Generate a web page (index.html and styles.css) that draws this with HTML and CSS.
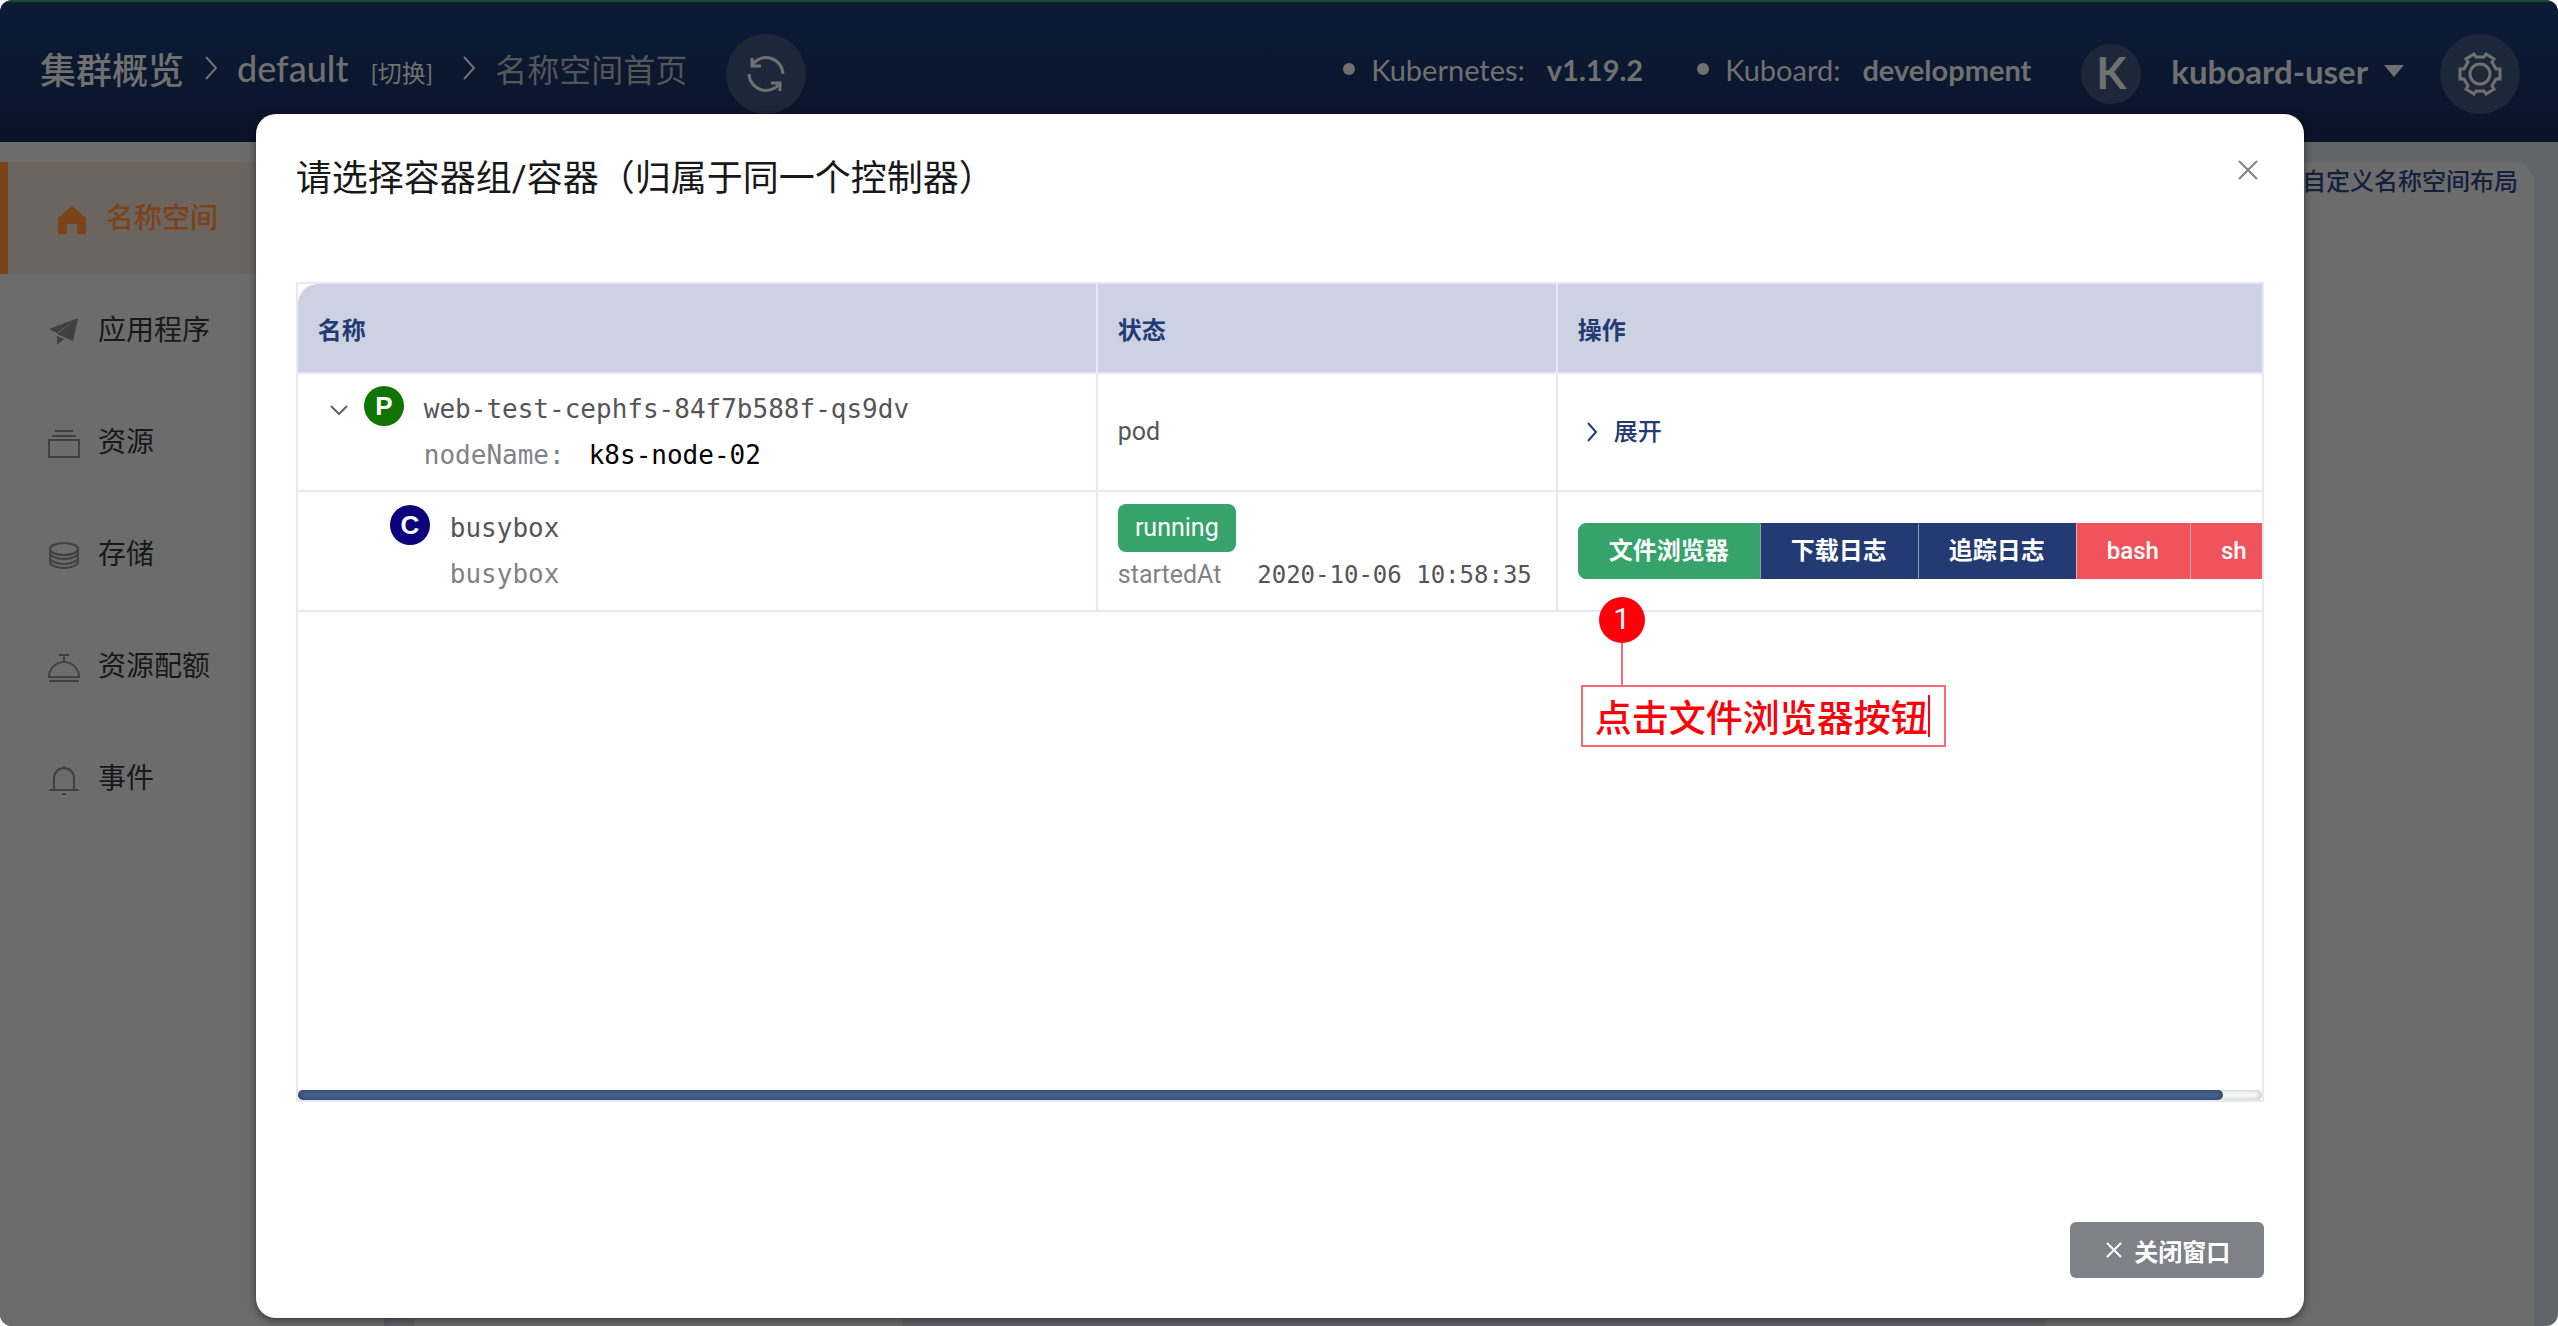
FILE: index.html
```html
<!DOCTYPE html>
<html lang="zh-CN">
<head>
<meta charset="utf-8">
<meta name="viewport" content="width=device-width, initial-scale=1">
<title>Kuboard - 名称空间首页</title>
<link rel="stylesheet" href="styles.css">
</head>
<body>
<div class="app">
  <header class="topbar">
    <nav class="crumbs">
      <a class="crumb" href="#">集群概览</a>
      <svg class="sep" viewBox="0 0 14 24"><path d="M2 1l10 11L2 23"/></svg>
      <a class="crumb" href="#">default</a>
      <a class="crumb-switch" href="#">[切换]</a>
      <svg class="sep" viewBox="0 0 14 24"><path d="M2 1l10 11L2 23"/></svg>
      <span class="crumb-current">名称空间首页</span>
    </nav>
    <button class="round-btn refresh" aria-label="刷新">
      <svg width="40" height="40" viewBox="0 0 40 40"><path d="M37 20A17 17 0 0 0 6 11M3 20a17 17 0 0 0 31 9M6 4v8h9M34 37v-8h-9"/></svg>
    </button>
    <div class="info">
      <span class="version"><i class="dot"></i>Kubernetes:<b>v1.19.2</b></span>
      <span class="version"><i class="dot"></i>Kuboard:<b>development</b></span>
    </div>
    <button class="user"><span class="avatar">K</span><span class="user-name">kuboard-user<svg width="20" height="12" viewBox="0 0 20 12"><path d="M0 0h20L10 12z"/></svg></span></button>
    <button class="round-btn" aria-label="设置">
      <svg width="44" height="44" viewBox="0 0 44 44"><circle cx="22" cy="22" r="10"/><path d="M16 2L18 5H26L28 2L36 7L34 10L38 17H42V27H38L34 34L36 37L28 42L26 39H18L16 42L8 37L10 34L6 27H2V17H6L10 10L8 7z"/></svg>
    </button>
  </header>
  <div class="layout">
    <nav class="sidebar">
      <a class="item active" href="#"><svg class="solid" viewBox="0 0 32 32"><path d="M16 2l14 12v16h-9V20H11v10H2V14z"/></svg>名称空间</a>
      <a class="item" href="#"><svg class="solid" viewBox="0 0 32 32"><path d="M30 2L1 13l8 4zM30 2L9 18l16 7zM9 20v9l7-6z"/></svg>应用程序</a>
      <a class="item" href="#"><svg viewBox="0 0 32 32"><path d="M1 12h30v17H1zM4 8h24M7 3h18"/></svg>资源</a>
      <a class="item" href="#"><svg viewBox="0 0 32 32"><ellipse cx="16" cy="9" rx="14" ry="6"/><path d="M2 9v3c0 4 6 7 14 7s14-3 14-7V9M2 13v4c0 4 6 7 14 7s14-3 14-7v-4M2 18v4c0 3 6 6 14 6s14-3 14-6v-4"/></svg>存储</a>
      <a class="item" href="#"><svg viewBox="0 0 32 32"><path d="M1 25a15 15 0 0 1 30 0zM1 29h30M11 3h10M16 3v6"/></svg>资源配额</a>
      <a class="item" href="#"><svg viewBox="0 0 32 32"><path d="M6 26V14a10 10 0 0 1 20 0v12M1 26h30M16 2v3M14 30h4"/></svg>事件</a>
    </nav>
    <main class="content">
      <div class="panel"></div>
      <div class="panel"><a href="#">自定义名称空间布局</a></div>
    </main>
  </div>

  <div class="overlay">
    <section class="dialog" role="dialog" aria-labelledby="dialog-title">
      <div class="dialog-head">
        <h2 id="dialog-title">请选择容器组/容器（归属于同一个控制器）</h2>
        <button class="dialog-x" aria-label="关闭"><svg width="20" height="20" viewBox="0 0 20 20"><path d="M1 1l18 18M19 1L1 19"/></svg></button>
      </div>
      <div class="table-box">
        <div class="table-scroll">
          <table>
            <colgroup><col class="col-name"><col class="col-state"><col></colgroup>
            <thead><tr><th>名称</th><th>状态</th><th>操作</th></tr></thead>
            <tbody>
              <tr>
                <td>
                  <div class="entry pod-entry">
                    <svg class="caret" width="18" height="12" viewBox="0 0 18 12"><path d="M1 2l8 8 8-8"/></svg>
                    <span class="badge pod">P</span>
                    <div class="mono"><div>web-test-cephfs-84f7b588f-qs9dv</div><div><span class="muted">nodeName:</span><span class="node">k8s-node-02</span></div></div>
                  </div>
                </td>
                <td>pod</td>
                <td><button class="expand"><svg width="12" height="20" viewBox="0 0 12 20"><path d="M2 1l8 9-8 9"/></svg>展开</button></td>
              </tr>
              <tr>
                <td>
                  <div class="entry box-entry">
                    <span class="badge box">C</span>
                    <div class="mono"><div>busybox</div><div class="muted">busybox</div></div>
                  </div>
                </td>
                <td>
                  <span class="tag">running</span>
                  <div class="started"><span class="muted">startedAt</span><time>2020-10-06 10:58:35</time></div>
                </td>
                <td>
                  <div class="actions">
                    <button class="success">文件浏览器</button><button class="primary">下载日志</button><button class="primary">追踪日志</button><button class="danger">bash</button><button class="danger">sh</button>
                  </div>
                </td>
              </tr>
            </tbody>
          </table>
        </div>
        <div class="track"><div class="thumb"></div></div>
      </div>
      <div class="dialog-foot">
        <button class="close"><svg width="16" height="16" viewBox="0 0 16 16"><path d="M1 1l14 14M15 1L1 15"/></svg>关闭窗口</button>
      </div>
      <div class="callout">
        <span class="step">1</span>
        <span class="stem"></span>
        <div class="note">点击文件浏览器按钮<i class="cursor"></i></div>
      </div>
    </section>
  </div>
</div>
</body>
</html>
```
FILE: styles.css
```css
* { box-sizing: border-box; }
body {
  margin: 0;
  background: #fff;
  font-family: Roboto, "Noto Sans CJK SC", sans-serif;
  font-size: 24px;
}
a { color: inherit; text-decoration: none; }
button { border: 0; padding: 0; background: none; color: inherit; font: inherit; cursor: pointer; }
svg { display: block; flex: none; fill: none; stroke: currentColor; stroke-width: 2; }

.app {
  position: relative;
  display: flex;
  flex-direction: column;
  min-height: 100vh;
  border-radius: 12px;
  overflow: hidden;
  background: #626469;
}

/* top bar */
.topbar {
  position: relative;
  z-index: 1;
  display: flex;
  align-items: center;
  height: 142px;
  padding: 4px 38px 0 40px;
  border-top: 2px solid #1d4a2e;
  background: linear-gradient(#0d1b37, #091428);
  color: #707070;
  font-family: Lato, "Noto Sans CJK SC", sans-serif;
  white-space: nowrap;
}
.crumbs { display: flex; align-items: center; padding-bottom: 12px; }
.crumb { font-size: 36px; font-weight: 500; }
.crumb-switch { margin-left: 22px; padding-top: 6px; font-size: 24px; }
.crumb-current { font-size: 32px; color: #565656; }
.sep { width: 14px; height: 24px; margin: 0 19px 0 20px; }
.crumb-switch + .sep { margin-left: 29px; }
.round-btn {
  display: grid;
  place-items: center;
  flex: none;
  width: 80px;
  height: 80px;
  border-radius: 50%;
  background: #1c2839;
}
.round-btn svg { stroke-width: 3; }
.refresh { margin-left: 39px; }
.info { display: flex; gap: 54px; margin-left: auto; padding-bottom: 10px; font-size: 29px; }
.version { display: flex; align-items: center; font-weight: 400; }
.version b { margin-left: 22px; font-weight: 700; }
.dot { width: 12px; height: 12px; margin-right: 16px; border-radius: 50%; background: #707070; }
.user { display: flex; align-items: center; margin: 0 36px 0 50px; font-size: 33px; font-weight: 700; }
.user-name { display: flex; align-items: center; padding-bottom: 6px; }
.avatar {
  flex: none;
  width: 60px;
  height: 60px;
  margin-right: 30px;
  border-radius: 50%;
  background: #1c2839;
  font-size: 44px;
  line-height: 56px;
  text-align: center;
}
.user svg { margin-left: 16px; fill: currentColor; stroke: none; }

/* page behind the dialog */
.layout { display: flex; flex: 1; }
.sidebar { width: 384px; padding-top: 20px; background: #6c6c6c; box-shadow: 0 0 24px #4e535c; }
.item {
  display: flex;
  align-items: center;
  gap: 18px;
  height: 112px;
  padding: 0 0 4px 48px;
  color: #181818;
  font-size: 28px;
}
.item svg { width: 32px; height: 32px; margin-top: 8px; color: #404040; }
.item .solid { fill: currentColor; stroke: none; }
.item.active { border-left: 8px solid #7a431a; background: #6c655f; color: #7a431a; font-weight: 500; }
.item.active svg { color: #7a431a; }
.content { display: flex; justify-content: space-between; flex: 1; padding: 20px 24px 0 30px; }
.panel {
  width: 488px;
  padding: 0 16px;
  border-radius: 20px 20px 0 0;
  background: #6c6c6c;
  color: #121f3d;
  font-weight: 500;
  line-height: 40px;
  text-align: right;
}

/* dialog */
.overlay { position: absolute; inset: 0; z-index: 2; display: flex; padding: 114px 10% 8px; }
.dialog {
  position: relative;
  display: flex;
  flex-direction: column;
  flex: 1;
  margin-right: -2px;
  padding: 40px;
  border-radius: 20px;
  background: #fff;
  box-shadow: 0 2px 8px rgba(0, 0, 0, .5);
}
.dialog-head { display: flex; justify-content: space-between; align-items: flex-start; margin-bottom: 78px; }
.dialog-head h2 { margin: 0; color: #181818; font-size: 36px; font-weight: 400; line-height: 50px; }
.dialog-x { padding: 6px; color: #808288; }
.table-box { display: flex; flex-direction: column; flex: 1; border: 2px solid #e6e8f5; }
.table-scroll { flex: 1; overflow: hidden; }
table { width: 102%; border-collapse: separate; border-spacing: 0; table-layout: fixed; }
.col-name { width: 800px; }
.col-state { width: 460px; }
th, td { padding: 12px 20px; border-right: 2px solid #e6e8f5; border-bottom: 2px solid #e6e8f5; text-align: left; }
th { height: 90px; background: #ccd2e2; color: #233b72; font-weight: 700; }
th:first-child { border-top-left-radius: 20px; }
td { color: #555; font-size: 25px; line-height: 46px; }
.entry { display: flex; align-items: flex-start; }
.pod-entry { padding-left: 12px; }
.box-entry { padding-left: 72px; }
.caret { margin: 18px 16px 0 0; color: #606266; }
.badge {
  flex: none;
  width: 40px;
  height: 40px;
  margin-right: 20px;
  border-radius: 50%;
  color: #fff;
  font-family: "Liberation Sans", sans-serif;
  font-size: 26px;
  font-weight: 700;
  line-height: 40px;
  text-align: center;
}
.pod { background: #107400; }
.box { background: #0c007c; }
.mono { font-family: "DejaVu Sans Mono", monospace; font-size: 26px; }
.muted { color: #808288; }
.node { margin-left: 24px; color: #000; }
.tag { display: block; width: 118px; height: 48px; border-radius: 8px; background: #35a36a; color: #fff; line-height: 48px; text-align: center; }
.started { display: flex; justify-content: space-between; white-space: nowrap; padding-right: 4px; }
.started time { font-family: "DejaVu Sans Mono", monospace; font-size: 24px; }
.expand { display: flex; align-items: center; gap: 16px; padding-left: 8px; color: #233b72; font-size: 24px; font-weight: 500; }
.actions { display: flex; }
.actions button { height: 56px; padding: 0 30px; border: 1px solid transparent; border-left-color: rgba(255, 255, 255, .5); color: #fff; font-size: 24px; font-weight: 700; white-space: nowrap; }
.actions .success { border-color: #35a36a; border-radius: 8px 0 0 8px; background: #35a36a; }
.actions .primary { background-color: #233b72; }
.actions .danger { background-color: #f1535c; font-weight: 500; }
.actions button:last-child { border-radius: 0 8px 8px 0; }
.track { height: 10px; border-radius: 5px; box-shadow: inset 0 0 6px rgba(0, 0, 0, .3); }
.thumb { width: 98%; height: 10px; border-radius: 5px; background: #475f8c; box-shadow: inset 0 0 5px rgba(0, 0, 0, .4); }
.dialog-foot { display: flex; justify-content: flex-end; padding-top: 120px; }
.close { display: flex; align-items: center; gap: 12px; height: 56px; padding: 0 34px 0 36px; border-radius: 6px; background: #7f8188; color: #fff; font-weight: 700; }

/* tutorial callout laid over the dialog */
.callout { position: absolute; left: 1325px; top: 483px; }
.step { display: block; width: 46px; height: 46px; margin-left: 18px; border-radius: 50%; background: #fe000a; color: #fff; font-size: 30px; line-height: 44px; text-align: center; }
.stem { display: block; width: 2px; height: 42px; margin-left: 40px; background: #f66a75; }
.note { display: flex; align-items: center; height: 62px; padding: 0 14px 0 12px; border: 2px solid #f66a75; background: #fff; color: #fe000a; font-size: 37px; font-weight: 500; white-space: nowrap; }
.cursor { width: 2px; height: 42px; background: #fe000a; }
```
